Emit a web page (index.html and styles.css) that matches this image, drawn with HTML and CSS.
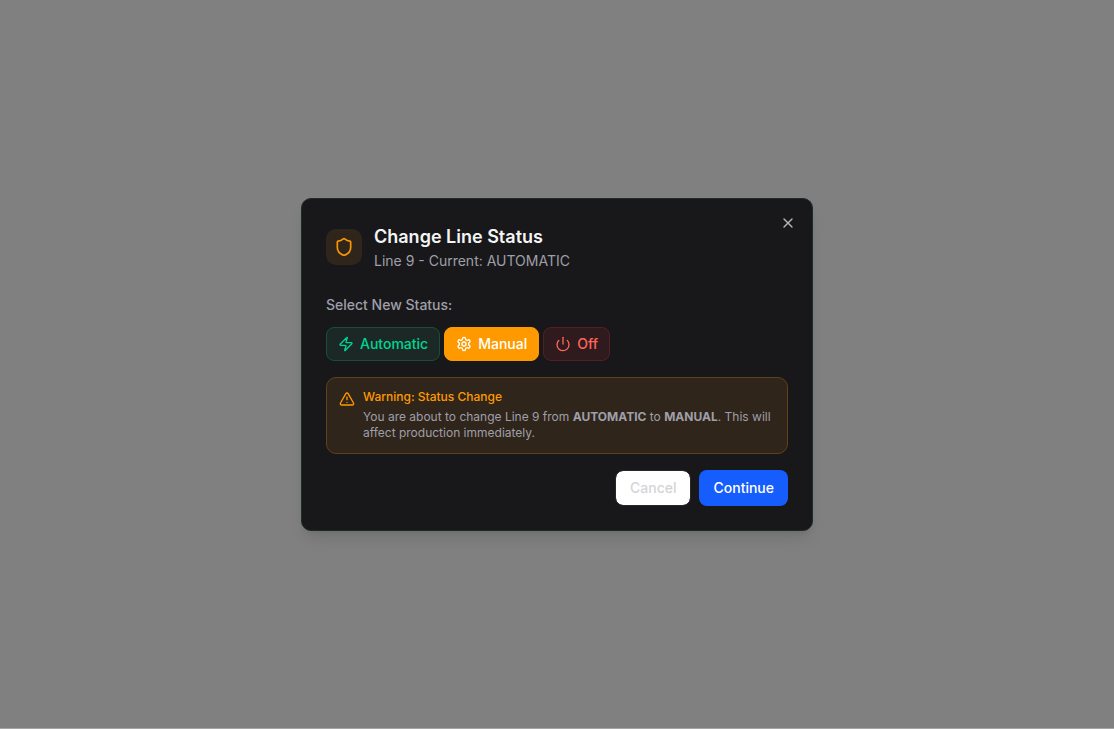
FILE: index.html
```html
<!DOCTYPE html>
<html lang="en">
<head>
<meta charset="utf-8">
<meta name="viewport" content="width=device-width, initial-scale=1">
<title>Change Line Status</title>
<link rel="stylesheet" href="styles.css">
</head>
<body>
<main class="overlay">
  <section class="dialog" role="dialog" aria-modal="true" aria-labelledby="dialog-title">
    <button class="close" type="button" aria-label="Close">
      <svg class="icon" viewBox="0 0 24 24"><path d="M18 6 6 18"/><path d="m6 6 12 12"/></svg>
    </button>
    <header class="header">
      <span class="badge">
        <svg class="icon icon-large" viewBox="0 0 24 24"><path d="M20 13c0 5-3.500 7.500-7.660 8.950a1 1 0 0 1-.67-.01C7.500 20.500 4 18 4 13V6a1 1 0 0 1 1-1c2 0 4.500-1.200 6.240-2.720a1.170 1.170 0 0 1 1.520 0C14.510 3.810 17 5 19 5a1 1 0 0 1 1 1z"/></svg>
      </span>
      <div>
        <h1 class="title" id="dialog-title">Change Line Status</h1>
        <p class="subtitle">Line 9 - Current: AUTOMATIC</p>
      </div>
    </header>
    <p class="label" id="status-label">Select New Status:</p>
    <div class="statuses" role="group" aria-labelledby="status-label">
      <button class="status automatic" type="button">
        <svg class="icon" viewBox="0 0 24 24"><path d="M4 14a1 1 0 0 1-.78-1.630l9.900-10.200a.5.5 0 0 1 .86.460l-1.920 6.020A1 1 0 0 0 13 10h7a1 1 0 0 1 .78 1.630l-9.900 10.200a.5.5 0 0 1-.86-.460l1.920-6.020A1 1 0 0 0 11 14z"/></svg>
        Automatic
      </button>
      <button class="status manual" type="button" aria-pressed="true">
        <svg class="icon" viewBox="0 0 24 24"><path d="M12.220 2h-.44a2 2 0 0 0-2 2v.18a2 2 0 0 1-1 1.730l-.43.250a2 2 0 0 1-2 0l-.15-.08a2 2 0 0 0-2.730.730l-.22.380a2 2 0 0 0 .73 2.730l.15.100a2 2 0 0 1 1 1.720v.510a2 2 0 0 1-1 1.740l-.15.090a2 2 0 0 0-.73 2.730l.22.380a2 2 0 0 0 2.730.730l.15-.08a2 2 0 0 1 2 0l.43.250a2 2 0 0 1 1 1.730V20a2 2 0 0 0 2 2h.44a2 2 0 0 0 2-2v-.18a2 2 0 0 1 1-1.730l.43-.25a2 2 0 0 1 2 0l.15.080a2 2 0 0 0 2.730-.73l.22-.39a2 2 0 0 0-.73-2.730l-.15-.08a2 2 0 0 1-1-1.740v-.5a2 2 0 0 1 1-1.740l.15-.09a2 2 0 0 0 .73-2.730l-.22-.38a2 2 0 0 0-2.730-.73l-.15.080a2 2 0 0 1-2 0l-.43-.25a2 2 0 0 1-1-1.730V4a2 2 0 0 0-2-2z"/><circle cx="12" cy="12" r="3"/></svg>
        Manual
      </button>
      <button class="status off" type="button">
        <svg class="icon" viewBox="0 0 24 24"><path d="M12 2v10"/><path d="M18.400 6.600a9 9 0 1 1-12.770.04"/></svg>
        Off
      </button>
    </div>
    <div class="warning" role="alert">
      <svg class="icon warning-icon" viewBox="0 0 24 24"><path d="m21.730 18-8-14a2 2 0 0 0-3.480 0l-8 14A2 2 0 0 0 4 21h16a2 2 0 0 0 1.730-3"/><path d="M12 9v4"/><path d="M12 17h.01"/></svg>
      <div>
        <h2 class="warning-title">Warning: Status Change</h2>
        <p class="warning-text">You are about to change Line 9 from <strong>AUTOMATIC</strong> to <strong>MANUAL</strong>. This will affect production immediately.</p>
      </div>
    </div>
    <footer class="footer">
      <button class="action cancel" type="button">Cancel</button>
      <button class="action continue" type="button">Continue</button>
    </footer>
  </section>
</main>
</body>
</html>
```
FILE: styles.css
```css
* { box-sizing: border-box; }
body, h1, h2, p { margin: 0; }
body { font: 14px/20px Inter, sans-serif; background: #808080; color: #9f9fa9; }
button { font: inherit; font-weight: 500; cursor: pointer; }
.overlay {
  min-height: 100vh;
  display: flex;
  align-items: center;
  justify-content: center;
  border-bottom: 1px solid #a5a5a5;
}
.dialog {
  position: relative;
  width: 100%;
  max-width: 512px;
  padding: 24px;
  border: 1px solid #1e2b29;
  border-radius: 10px;
  background: #18181a;
  box-shadow: 0 10px 15px -3px rgba(0, 0, 0, 0.1), 0 4px 6px -4px rgba(0, 0, 0, 0.1);
}
.icon {
  width: 16px;
  height: 16px;
  flex: none;
  display: block;
  fill: none;
  stroke: currentColor;
  stroke-width: 2;
  stroke-linecap: round;
  stroke-linejoin: round;
}
.icon-large { width: 20px; height: 20px; }
.close {
  position: absolute;
  top: 16px;
  right: 16px;
  padding: 0;
  border: 0;
  background: none;
  color: #b5b5b8;
}
.header { display: flex; align-items: center; gap: 12px; margin-bottom: 24px; }
.badge { padding: 8px; border-radius: 10px; background: #2f251b; color: #fe9a00; }
.title { font-size: 18px; line-height: 28px; font-weight: 600; color: #f4f4f5; }
.label { font-weight: 500; margin-bottom: 12px; }
.statuses { display: flex; flex-wrap: wrap; gap: 4px; margin-bottom: 16px; }
.status {
  display: flex;
  align-items: center;
  gap: 6px;
  padding: 6px 11px;
  border: 1px solid;
  border-radius: 8px;
}
.automatic { color: #00d492; background: #1b2826; border-color: #15503f; }
.manual { color: #fff; background: #fe9a00; border-color: #fe9a00; }
.off { color: #ff6659; background: #2f1b1e; border-color: #561f24; }
.warning {
  display: flex;
  gap: 8px;
  padding: 12px;
  margin-bottom: 16px;
  border: 1px solid #5f411a;
  border-radius: 10px;
  background: #2f251b;
}
.warning-icon { margin-top: 1px; color: #fe9a00; }
.warning-title { margin-bottom: 5px; font-size: 12px; line-height: 14px; font-weight: 500; color: #fe9a00; }
.warning-text { font-size: 12px; line-height: 16px; }
.footer { display: flex; justify-content: flex-end; gap: 8px; }
.action { padding: 8px 14px; border: 0; border-radius: 8px; }
.cancel { padding: 7px 14px; color: #d4d4d8; background: #fff; border: 1px solid #27272a; background-clip: padding-box; }
.continue { color: #fff; background: #155dfc; }
```
